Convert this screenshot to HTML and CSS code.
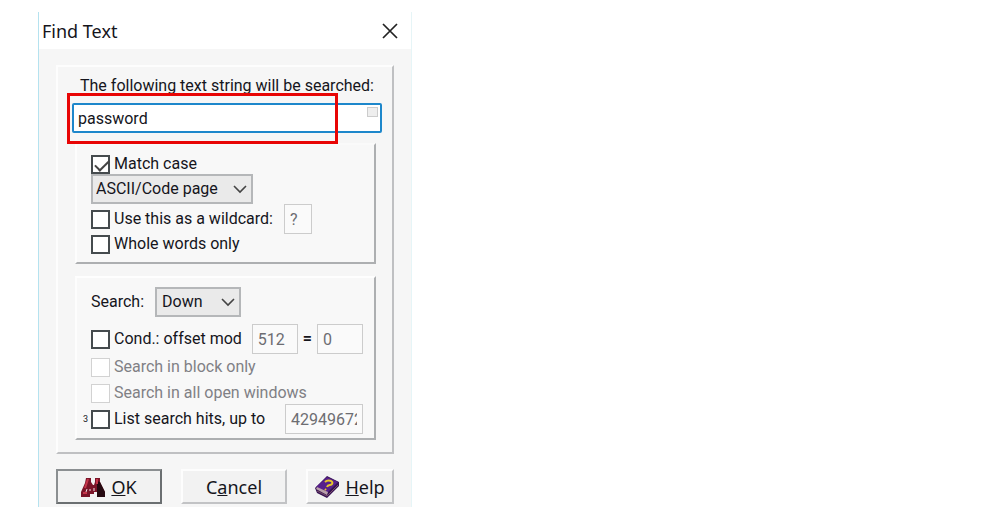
FILE: index.html
```html
<!DOCTYPE html>
<html lang="en">
<head>
    <meta charset="UTF-8">
    <meta name="viewport" content="width=device-width, initial-scale=1.0">
    <title>Find Text</title>
    <link rel="stylesheet" href="styles.css">
</head>
<body>
    <form class="dialog">
        <header class="titlebar">
            <h1>Find Text</h1>
            <button type="button" class="close" aria-label="Close">
                <svg width="16" height="16" viewBox="0 0 16 16"><path d="M1 1L15 15M15 1L1 15" fill="none" stroke="#222" stroke-width="1.7"/></svg>
            </button>
        </header>

        <div class="content">
            <div class="panel">
                <label class="caption" for="searchText">The following text string will be searched:</label>
                <div class="search-box">
                    <input type="text" id="searchText" value="password">
                    <span class="grip"></span>
                    <span class="highlight"></span>
                </div>

                <div class="group">
                    <label class="row"><input type="checkbox" checked>Match case</label>
                    <div class="row tall">
                        <span class="select">
                            <select class="codepage" aria-label="Character set">
                                <option>ASCII/Code page</option>
                                <option>Unicode</option>
                            </select>
                            <svg width="14" height="9" viewBox="0 0 14 9"><path d="M1 1L7 7L13 1" fill="none" stroke="#444" stroke-width="1.6"/></svg>
                        </span>
                    </div>
                    <div class="row tall">
                        <label class="check"><input type="checkbox" id="wildcard">Use this as a wildcard:</label>
                        <input type="text" class="field tiny" value="?" aria-label="Wildcard" disabled>
                    </div>
                    <label class="row"><input type="checkbox">Whole words only</label>
                </div>

                <div class="group options">
                    <div class="row tall direction">
                        <label for="direction">Search:</label>
                        <span class="select">
                            <select id="direction">
                                <option>Down</option>
                                <option>Up</option>
                                <option>All</option>
                            </select>
                            <svg width="14" height="9" viewBox="0 0 14 9"><path d="M1 1L7 7L13 1" fill="none" stroke="#444" stroke-width="1.6"/></svg>
                        </span>
                    </div>
                    <div class="row tall">
                        <label class="check"><input type="checkbox">Cond.: offset mod</label>
                        <span class="offset">
                            <input type="text" class="field" value="512" aria-label="Modulus" disabled>
                            <b>=</b>
                            <input type="text" class="field" value="0" aria-label="Remainder" disabled>
                        </span>
                    </div>
                    <div class="scope">
                        <label class="row"><input type="checkbox" disabled>Search in block only</label>
                        <label class="row"><input type="checkbox" disabled>Search in all open windows</label>
                    </div>
                    <div class="row tall hits">
                        <span class="mark">3</span>
                        <label class="check"><input type="checkbox">List search hits, up to</label>
                        <input type="text" class="field wide" value="4294967295" aria-label="Maximum hits" disabled>
                    </div>
                </div>
            </div>

            <div class="buttons">
                <button type="submit" class="ok">
                    <svg width="24" height="20" viewBox="0 0 24 20">
                        <path d="M5 1h5v4l2 3h1l1-3V1h5v4l5 10v5h-8v-5h-3v2H9v3H0v-5L4 6z" fill="#7a1428"/>
                        <path d="M16 4l3 1 5 10v5h-8v-6z" fill="#250910"/>
                        <path d="M7 2l-3 9M16 2v5M2 16h4" fill="none" stroke="#c5354a" stroke-width="2"/>
                        <path d="M6 12l-1 3M9 12v2M13 11v3" fill="none" stroke="#f2dfe2" stroke-width="1"/>
                    </svg>
                    <span><u>O</u>K</span>
                </button>
                <button type="button" class="cancel"><span>C<u>a</u>ncel</span></button>
                <button type="button" class="help">
                    <svg width="24" height="22" viewBox="0 0 24 22">
                        <path d="M0 12L12 0l12 6v4L12 22 2 17z" fill="#351052"/>
                        <path d="M1 11L12 1l11 5-11 11z" fill="#57208c"/>
                        <path d="M1 13l11 6 1-3L2 11z" fill="#b9a0aa"/>
                        <path d="M2 15l10 5 11-11" fill="none" stroke="#7b506b" stroke-width="1"/>
                        <path d="M10 6c3-3 9-1 7 2-1 2-4 0-5 3M10 13l1 1" fill="none" stroke="#e6c52c" stroke-width="2"/>
                    </svg>
                    <span><u>H</u>elp</span>
                </button>
            </div>
        </div>
    </form>
</body>
</html>
```
FILE: styles.css
```css
* {
    box-sizing: border-box;
}
body {
    margin: 0;
    padding: 12px 38px;
    background-color: #fff;
    color: #15151c;
    font-family: Roboto, "Liberation Sans", sans-serif;
    font-size: 16px;
    line-height: 20px;
}
input, select, button {
    margin: 0;
    color: inherit;
    font: inherit;
}
.dialog {
    max-width: 374px;
    border-left: 1px solid #b5e2ef;
    border-right: 1px solid #e6f5f7;
}
.titlebar {
    display: flex;
    align-items: center;
    justify-content: space-between;
    height: 37px;
    padding: 0 13px 0 3px;
}
.titlebar h1 {
    margin: 0;
    font-family: "Noto Sans", sans-serif;
    font-size: 18px;
    font-weight: normal;
}
.close {
    display: flex;
    padding: 0;
    border: 0;
    background: none;
}
.content {
    padding: 16px 17px 3px;
    background-color: #f6f6f6;
}
.panel {
    padding: 9px 17px 12px;
    border: 2px solid;
    border-color: #fdfdfd #bfc0c2 #bfc0c2 #fdfdfd;
}
.caption {
    display: block;
    height: 27px;
    padding-left: 5px;
}
.search-box {
    position: relative;
    margin: 0 -7px 0 -3px;
}
.search-box input {
    display: block;
    width: 100%;
    height: 30px;
    padding: 0 4px;
    border: 2px solid #1d87cb;
    border-radius: 2px;
    background-color: #fff;
}
.grip {
    position: absolute;
    top: 4px;
    right: 4px;
    width: 11px;
    height: 10px;
    border: 1px solid #ccc;
    background-color: #eee;
}
.highlight {
    position: absolute;
    top: -10px;
    right: 44px;
    bottom: -11px;
    left: -5px;
    border: 3px solid #e80505;
}
.group {
    margin: 10px -1px 0 0;
    padding: 9px 10px 8px 14px;
    border: 2px solid;
    border-color: #fafafa #adafb1 #adafb1 #fdfdfd;
    background-color: #f8f8f8;
}
.options {
    margin-top: 12px;
    padding: 9px 11px 4px 14px;
    border-top-color: #fefefe;
}
.row {
    display: flex;
    align-items: center;
    height: 20px;
}
.tall {
    height: 30px;
    justify-content: space-between;
}
.check {
    display: flex;
    align-items: center;
}
input[type="checkbox"] {
    appearance: none;
    width: 19px;
    height: 19px;
    margin-right: 4px;
    border: 2px solid #454b4e;
    background-color: #fff;
}
input[type="checkbox"]:checked::before {
    content: "";
    display: block;
    width: 12px;
    height: 6px;
    margin: 3px 2px;
    border: solid #444;
    border-width: 0 0 2px 2px;
    transform: rotate(-45deg);
}
input[type="checkbox"]:disabled {
    border: 1px solid #d2d2d2;
}
.scope {
    display: grid;
    gap: 6px;
    padding: 3px 0 1px;
    color: #808085;
}
.select {
    position: relative;
}
.select svg {
    position: absolute;
    top: 11px;
    right: 6px;
    pointer-events: none;
}
select {
    appearance: none;
    display: block;
    width: 86px;
    height: 30px;
    padding: 0 5px;
    border: 2px solid #b5b7b9;
    border-radius: 0;
    background-color: #eaeaea;
}
.codepage {
    width: 162px;
    padding: 0 3px;
}
.field {
    width: 46px;
    height: 30px;
    padding: 0 5px;
    border: 1px solid #ccc;
    background-color: #fafafa;
    color: #6d6d72;
}
.tiny {
    width: 28px;
    margin-right: 52px;
}
.wide {
    width: 78px;
}
.offset {
    display: flex;
    align-items: center;
    gap: 5px;
}
.direction {
    justify-content: flex-start;
    gap: 11px;
    margin-bottom: 7px;
}
.hits {
    position: relative;
}
.mark {
    position: absolute;
    left: -8px;
    font-size: 9px;
}
.buttons {
    display: flex;
    justify-content: space-between;
    margin-top: 15px;
}
.buttons button {
    display: flex;
    align-items: center;
    justify-content: center;
    gap: 6px;
    width: 106px;
    height: 35px;
    padding: 0;
    border: 2px solid;
    border-color: #fdfdfd #c2c3c5 #c2c3c5 #fdfdfd;
    background-color: #f2f2f2;
    font-family: "Noto Sans", sans-serif;
    font-size: 18px;
}
.buttons .ok {
    border-color: #8b8f91 #6b6f71 #6b6f71 #8b8f91;
}
.buttons .help {
    width: 88px;
}
```
